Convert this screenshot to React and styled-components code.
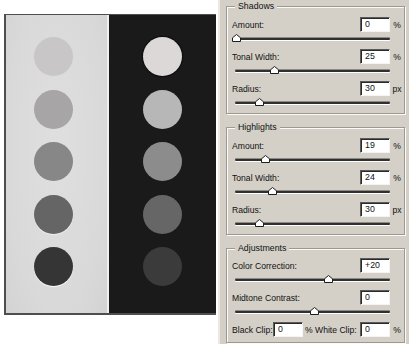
import React from "react";
import styled, { createGlobalStyle } from "styled-components";

const Global = createGlobalStyle`
  html, body { margin: 0; padding: 0; background: #fff; }
  body { font-family: "Liberation Sans", Arial, sans-serif; }
`;

const Page = styled.div`
  display: flex;
  align-items: flex-start;
  width: 411px;
  height: 344px;
  overflow: hidden;
  background: #fff;
`;

const Picture = styled.div`
  flex: none;
  display: flex;
  width: 212px;
  height: 301px;
  margin: 14px 2px 0 4px;
  box-sizing: border-box;
  border-top: 1px solid #4e4e4e;
  border-left: 2px solid #4e4e4e;
  border-bottom: 2px solid #4e4e4e;
`;

const Half = styled.div`
  display: flex;
  flex-direction: column;
  align-items: center;
  gap: 13.5px;
  padding-top: 22px;
  box-sizing: border-box;
  width: ${(p) => (p.$dark ? "107px" : "103px")};
  padding-right: ${(p) => (p.$dark ? "0" : "7px")};
  background: ${(p) =>
    p.$dark
      ? "#1a1a1a"
      : "radial-gradient(ellipse at 50% 45%, #dfdfdf 0%, #d9d9d9 70%, #d3d3d3 100%)"};
  border-right: ${(p) => (p.$dark ? "none" : "2px solid #efefef")};
`;

const Circle = styled.div`
  width: 39px;
  height: 39px;
  border-radius: 50%;
  background: ${(p) => p.$c};
  box-shadow: ${(p) => p.$glow || "none"};
`;

const Panel = styled.div`
  flex: none;
  width: 191px;
  height: 344px;
  box-sizing: border-box;
  border-left: 2px solid #ebe8e2;
  background: #d4d0c8;
  padding: 6px 4px 0 6px;
  display: flex;
  flex-direction: column;
  gap: 13px;
`;

const Group = styled.div`
  position: relative;
  border: 1px solid #9d998f;
  box-shadow: inset 1px 1px 0 #fbfaf8, 1px 1px 0 #fbfaf8;
  padding: ${(p) => p.$pad || "10px 0 0 0"};
`;

const Title = styled.span`
  position: absolute;
  left: 8px;
  top: -6px;
  padding: 0 3px;
  background: #d4d0c8;
  font-size: 8.8px;
  line-height: 11px;
  color: #111;
`;

const ValueRow = styled.div`
  display: flex;
  align-items: center;
  height: 15px;
  padding-left: 5px;
  font-size: 8.6px;
  color: #111;
`;

const Label = styled.span`
  flex: ${(p) => (p.$w ? "none" : "1")};
  width: ${(p) => p.$w || "auto"};
  padding-left: ${(p) => p.$pl || "0"};
  white-space: nowrap;
`;

const Field = styled.div`
  flex: none;
  width: 30px;
  height: 15px;
  box-sizing: border-box;
  background: #fff;
  border: 1px solid;
  border-color: #5a5a5a #f4f4f4 #f4f4f4 #5a5a5a;
  box-shadow: inset 1px 1px 0 #2a2a2a;
  padding-left: 4px;
  font-size: 8.8px;
  line-height: 13px;
  color: #111;
`;

const Unit = styled.span`
  flex: none;
  width: 14px;
  text-align: center;
`;

const SliderRow = styled.div`
  height: 17px;
  box-sizing: border-box;
  padding: 6px 14px 0 8px;
`;

const Track = styled.div`
  position: relative;
  height: 2px;
  border-radius: 1px;
  background: #303030;
  box-shadow: 0 -1px 0 #8e8b84, 0 1px 0 #ffffff;
`;

const Thumb = styled.svg`
  position: absolute;
  top: -4px;
  width: 9px;
  height: 8px;
  margin-left: -4.5px;
`;

function Slider({ pos }) {
  return (
    <SliderRow>
      <Track>
        <Thumb viewBox="0 0 9 8" style={{ left: `${pos * 100}%` }}>
          <path d="M0.5 7.5 V3.8 L4.5 0.5 L8.5 3.8 V7.5 Z" fill="#ffffff" stroke="#1e1e1e" strokeWidth="1" />
        </Thumb>
      </Track>
    </SliderRow>
  );
}

function Control({ label, value, unit, pos }) {
  return (
    <>
      <ValueRow>
        <Label>{label}</Label>
        <Field>{value}</Field>
        <Unit>{unit}</Unit>
      </ValueRow>
      <Slider pos={pos} />
    </>
  );
}

const lightCircles = [
  { c: "#c9c6c7" },
  { c: "#a7a5a6" },
  { c: "#878787" },
  { c: "#656565", glow: "0 1px 1px rgba(255,255,255,0.5)" },
  { c: "#353535", glow: "0 1px 1px rgba(255,255,255,0.9)" },
];
const darkCircles = [
  { c: "#dcd8d8", glow: "0 0 1px 1px rgba(0,0,0,0.6)" },
  { c: "#b7b7b7" },
  { c: "#8c8c8c" },
  { c: "#666666" },
  { c: "#3b3b3b" },
];

export default function App() {
  return (
    <>
      <Global />
      <Page>
        <Picture>
          <Half>
            {lightCircles.map((c, i) => (
              <Circle key={i} $c={c.c} $glow={c.glow} />
            ))}
          </Half>
          <Half $dark>
            {darkCircles.map((c, i) => (
              <Circle key={i} $c={c.c} $glow={c.glow} />
            ))}
          </Half>
        </Picture>
        <Panel>
          <Group>
            <Title>Shadows</Title>
            <Control label="Amount:" value="0" unit="%" pos={0.01} />
            <Control label="Tonal Width:" value="25" unit="%" pos={0.255} />
            <Control label="Radius:" value="30" unit="px" pos={0.16} />
          </Group>
          <Group>
            <Title>Highlights</Title>
            <Control label="Amount:" value="19" unit="%" pos={0.197} />
            <Control label="Tonal Width:" value="24" unit="%" pos={0.243} />
            <Control label="Radius:" value="30" unit="px" pos={0.16} />
          </Group>
          <Group $pad="9px 0 5px 0">
            <Title>Adjustments</Title>
            <Control label="Color Correction:" value="+20" unit="" pos={0.605} />
            <Control label="Midtone Contrast:" value="0" unit="" pos={0.51} />
            <ValueRow>
              <Label $w="41px">Black Clip:</Label>
              <Field>0</Field>
              <Label $pl="2px">% White Clip:</Label>
              <Field>0</Field>
              <Unit>%</Unit>
            </ValueRow>
          </Group>
        </Panel>
      </Page>
    </>
  );
}
